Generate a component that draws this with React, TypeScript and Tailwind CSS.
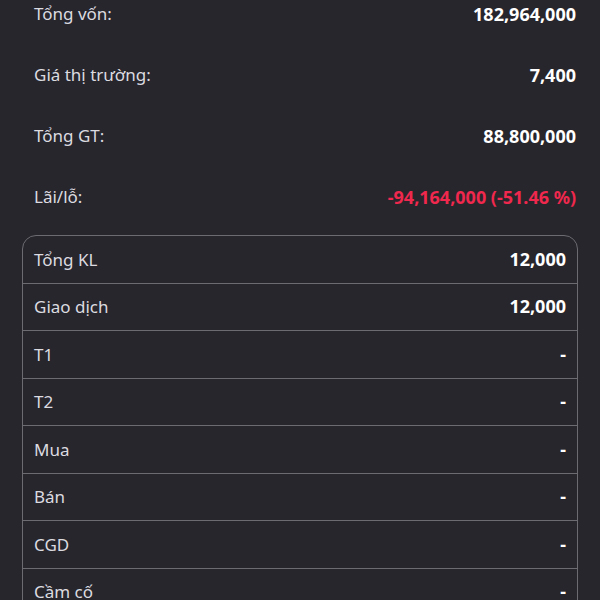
const summary = [
  { label: "Tổng vốn:", value: "182,964,000" },
  { label: "Giá thị trường:", value: "7,400" },
  { label: "Tổng GT:", value: "88,800,000" },
  { label: "Lãi/lỗ:", value: "-94,164,000 (-51.46 %)", loss: true },
];

const details = [
  { label: "Tổng KL", value: "12,000" },
  { label: "Giao dịch", value: "12,000" },
  { label: "T1", value: "-" },
  { label: "T2", value: "-" },
  { label: "Mua", value: "-" },
  { label: "Bán", value: "-" },
  { label: "CGD", value: "-" },
  { label: "Cầm cố", value: "-" },
];

export default function App() {
  return (
    <div
      className="h-[600px] w-[600px] overflow-hidden bg-[#27262c] text-[18px] text-[#dcdbe0]"
      style={{ fontFamily: '"Noto Sans", "Open Sans", sans-serif' }}
    >
      <div className="flex flex-col gap-[37px] pl-[34px] pr-[24px] pt-[2px]">
        {summary.map((s) => (
          <div key={s.label} className="flex h-6 items-center justify-between">
            <span className="text-[17px]">{s.label}</span>
            <span
              className={
                s.loss
                  ? "font-bold text-[#f0284e]"
                  : "font-bold text-white"
              }
            >
              {s.value}
            </span>
          </div>
        ))}
      </div>

      <div className="mx-[22px] mt-[26px] rounded-t-[14px] border border-[#6c6b71]">
        {details.map((d, i) => (
          <div
            key={d.label}
            className={
              i === 0
                ? "flex h-[46.5px] items-center justify-between px-[11px]"
                : "flex h-[47.5px] items-center justify-between border-t border-[#6c6b71] px-[11px]"
            }
          >
            <span className="text-[17px]">{d.label}</span>
            <span className="font-bold text-white">{d.value}</span>
          </div>
        ))}
      </div>
    </div>
  );
}
